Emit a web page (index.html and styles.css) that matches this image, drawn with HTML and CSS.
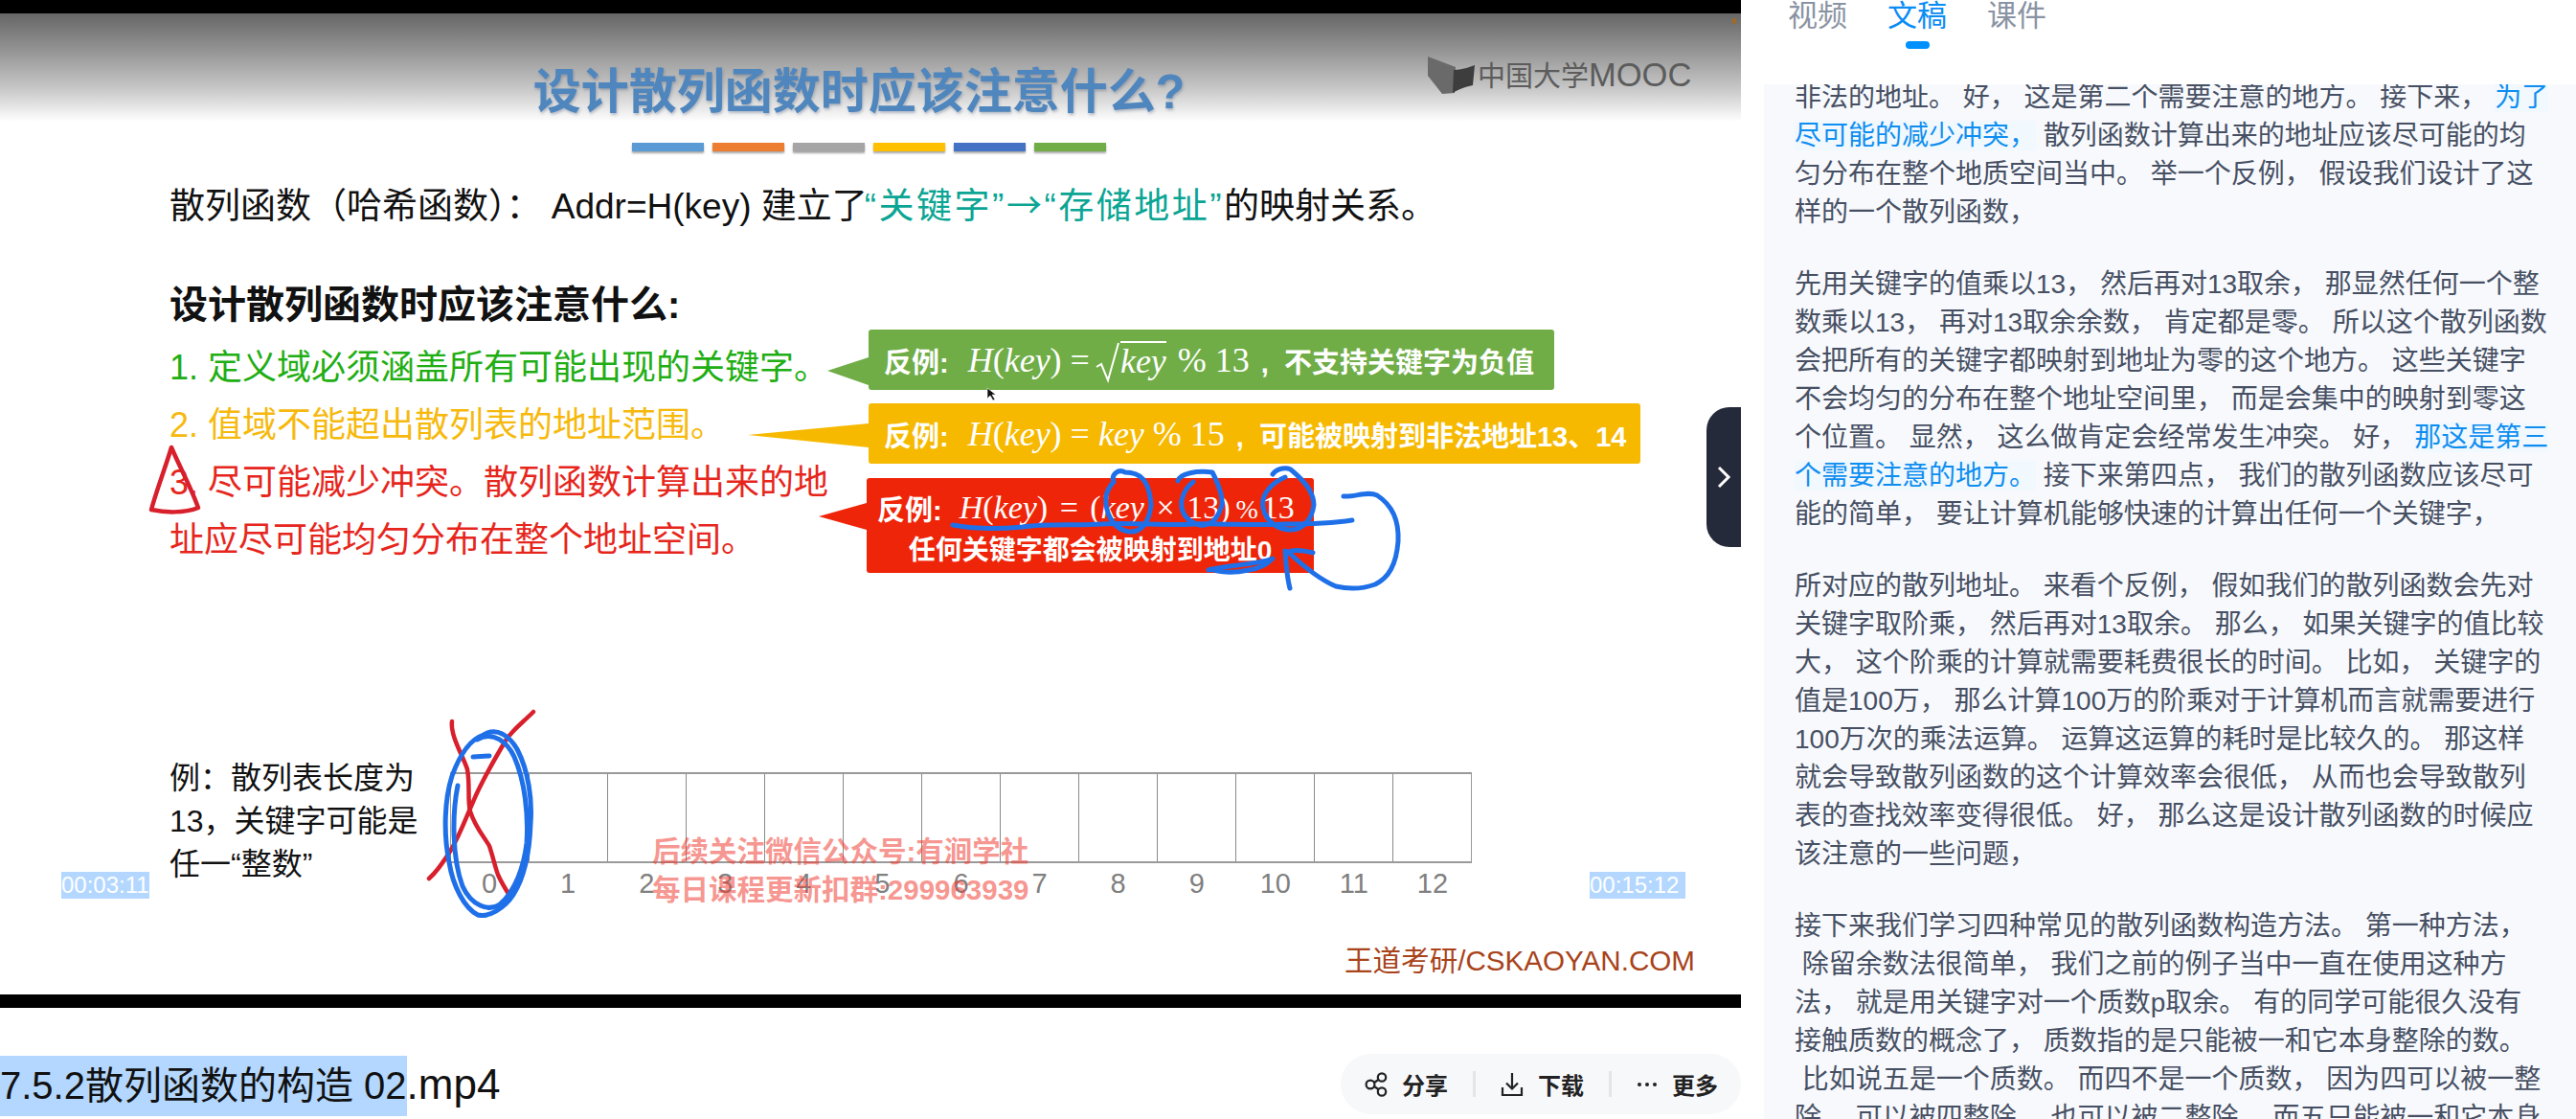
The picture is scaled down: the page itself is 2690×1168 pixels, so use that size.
FILE: index.html
```html
<!doctype html>
<html lang="zh-CN">
<head>
<meta charset="utf-8">
<title>7.5.2散列函数的构造</title>
<link rel="stylesheet" href="styles.css">
</head>
<body>
<div class="page">
  <main class="main">
    <div class="video">
      <div class="slide">
        <header class="slide-head">
          <h1 class="slide-title">设计散列函数时应该注意什么?</h1>
          <div class="mooc-logo">
            <svg class="mooc-icon" width="50" height="40" viewBox="0 0 50 40">
              <polygon points="0,0 29,11 28,38 15,39 0,20" fill="#6a6a6a"/>
              <path d="M27 14 Q37 14 49 9 L47 30 Q36 32 26 38 Z" fill="#3d3d3d"/>
            </svg>
            <span>中国大学<span class="mooc-latin">MOOC</span></span>
          </div>
        </header>
        <div class="bars">
          <span class="bar bar-blue"></span>
          <span class="bar bar-orange"></span>
          <span class="bar bar-grey"></span>
          <span class="bar bar-yellow"></span>
          <span class="bar bar-navy"></span>
          <span class="bar bar-green"></span>
        </div>
        <div class="slide-body">
          <p class="definition">散列函数（哈希函数）： Addr=H(key) 建立了<span class="teal">“关键字”<span class="arrow">→</span>“存储地址”</span>的映射关系。</p>
          <h2 class="rules-title">设计散列函数时应该注意什么:</h2>
          <ol class="rules">
            <li class="rule-green">1. 定义域必须涵盖所有可能出现的关键字。</li>
            <li class="rule-yellow">2. 值域不能超出散列表的地址范围。</li>
            <li class="rule-red">3. 尽可能减少冲突。散列函数计算出来的地<br>址应尽可能均匀分布在整个地址空间。</li>
          </ol>
          <div class="example">
            <p class="example-text">例：散列表长度为<br>13，关键字可能是<br>任一“整数”</p>
            <div class="table-wrap">
              <div class="hash-table">
                <span></span><span></span><span></span><span></span><span></span><span></span><span></span><span></span><span></span><span></span><span></span><span></span><span></span>
              </div>
              <div class="hash-index">
                <span>0</span><span>1</span><span>2</span><span>3</span><span>4</span><span>5</span><span>6</span><span>7</span><span>8</span><span>9</span><span>10</span><span>11</span><span>12</span>
              </div>
            </div>
          </div>
          <p class="credit">王道考研/CSKAOYAN.COM</p>
        </div>

        <div class="callout callout-green">
          <span class="cjk cjk-label">反例:</span>
          <span class="math"><i>H</i>(<i>key</i>) =</span>
          <svg class="radical" width="26" height="44" viewBox="0 0 26 44"><path d="M1 27 L6 24 L13 41 L24 2" fill="none" stroke="#fff" stroke-width="2"/></svg>
          <span class="math radicand"><i>key</i></span>
          <span class="math">% 13</span>
          <span class="cjk">, 不支持关键字为负值</span>
        </div>
        <div class="callout callout-yellow">
          <span class="cjk cjk-label">反例:</span>
          <span class="math"><i>H</i>(<i>key</i>) = <i>key</i> % 15</span>
          <span class="cjk">, 可能被映射到非法地址13、14</span>
        </div>
        <div class="callout callout-red">
          <div class="callout-line">
            <span class="cjk cjk-label">反例:</span>
            <span class="math math-tight"><i>H</i>(<i>key</i>) = (<i>key</i> × 13)<span class="pct">%</span>13</span>
          </div>
          <div class="callout-line callout-line-center"><span class="cjk">任何关键字都会被映射到地址0</span></div>
        </div>

        <div class="watermark">后续关注微信公众号:有涧学社<br>每日课程更新扣群:299963939</div>
        <span class="timestamp timestamp-start">00:03:11</span>
        <span class="timestamp timestamp-end">00:15:12</span>

        <svg class="ink" viewBox="0 14 1818 1024" width="1818" height="1024">
          <g class="ink-red">
            <path d="M179 467 C172 490 164 510 158 532 C172 535 192 536 207 530 C200 510 188 488 179 467 Z"/>
            <path d="M472 753 C470 768 484 790 488 803 C491 820 488 835 491 847 C497 865 506 874 511 883 C515 895 517 905 520 913 C524 922 528 928 531 933"/>
            <path d="M557 743 C545 755 535 762 528 773 C515 795 503 815 494 837 C486 855 480 872 471 887 C463 900 456 910 448 917"/>
          </g>
          <g class="ink-blue">
            <path d="M505 767 C520 758 533 770 540 782 C552 805 556 835 554 860 C553 890 548 915 536 934 C527 948 510 958 499 955 C485 948 473 925 469 900 C463 870 464 835 472 810 C480 788 490 772 505 767 Z"/>
            <path d="M498 772 C515 762 530 775 537 790 C548 815 552 850 550 880 C547 905 538 930 522 944 C510 952 492 945 483 925 C472 895 472 850 478 820"/>
            <path d="M494 790 L511 789"/>
            <path d="M995 548 C1020 553 1045 552 1068 550 C1095 546 1125 549 1151 547 C1185 545 1215 549 1246 547 C1280 546 1310 549 1342 547 C1370 547 1392 546 1412 543"/>
            <path d="M1163 503 C1160 495 1168 489 1175 493 C1190 493 1200 500 1202 527 C1200 545 1192 556 1179 555 C1165 553 1156 540 1155 525 C1154 515 1158 508 1163 503"/>
            <path d="M1230 502 C1232 494 1250 491 1266 493 C1275 510 1278 525 1275 530 C1270 545 1262 549 1253 548 C1240 545 1232 535 1234 522 C1236 513 1242 506 1246 503"/>
            <path d="M1329 495 C1333 489 1345 486 1350 492 C1362 502 1372 515 1372 527 C1370 543 1360 553 1348 553 C1335 553 1322 545 1319 530 C1316 515 1330 503 1342 498"/>
            <path d="M1403 518 C1415 519 1428 512 1438 517 C1455 528 1461 545 1460 565 C1458 590 1450 603 1436 610 C1422 615 1408 615 1395 612 C1378 605 1360 590 1345 576 C1353 573 1363 575 1371 577"/>
            <path d="M1342 575 C1343 590 1344 603 1347 614"/>
            <path d="M1262 595 C1280 590 1310 590 1329 583 C1322 590 1312 594 1304 595 C1290 598 1275 598 1264 594"/>
          </g>
        </svg>
        <span class="dust"></span>
        <svg class="pointer" width="12" height="16" viewBox="0 0 12 16"><path d="M1 1 L1 12 L4 9 L7 14 L9 13 L6 8 L10 8 Z" fill="#111" stroke="#fff" stroke-width="0.6"/></svg>
      </div>
      <button class="collapse"><svg width="16" height="26" viewBox="0 0 16 26"><path d="M3 3 L13 13 L3 23" fill="none" stroke="#fff" stroke-width="3"/></svg></button>
    </div>

    <div class="info">
      <h3 class="file-name"><span class="selected">7.5.2散列函数的构造 02</span><span class="file-ext">.mp4</span></h3>
      <div class="actions">
        <a class="action">
          <svg width="24" height="26" viewBox="0 0 24 26" fill="none" stroke="#222" stroke-width="2.2">
            <circle cx="6" cy="13" r="4.4"/><circle cx="18" cy="5.5" r="4.2"/><circle cx="18" cy="20.5" r="4.2"/>
            <path d="M10 11 L14.4 8 M10 15 L14.4 18"/>
          </svg>
          <span>分享</span>
        </a>
        <i class="action-sep"></i>
        <a class="action">
          <svg width="24" height="26" viewBox="0 0 24 26" fill="none" stroke="#222" stroke-width="2.2">
            <path d="M12 1 L12 17 M6 11.5 L12 17.5 L18 11.5 M2 16 L2 24 L22 24 L22 16"/>
          </svg>
          <span>下载</span>
        </a>
        <i class="action-sep"></i>
        <a class="action">
          <svg width="22" height="26" viewBox="0 0 22 26" fill="#222">
            <circle cx="3" cy="13" r="2"/><circle cx="11" cy="13" r="2"/><circle cx="19" cy="13" r="2"/>
          </svg>
          <span>更多</span>
        </a>
      </div>
    </div>
  </main>

  <aside class="side">
    <nav class="tabs">
      <a class="tab">视频</a>
      <a class="tab tab-active">文稿</a>
      <a class="tab">课件</a>
    </nav>
    <div class="transcript">
      <p class="para">非法的地址。 好， 这是第二个需要注意的地方。 接下来， <span class="mark">为了</span>
<span class="mark">尽可能的减少冲突，</span> 散列函数计算出来的地址应该尽可能的均
匀分布在整个地质空间当中。 举一个反例， 假设我们设计了这
样的一个散列函数，</p>
      <p class="para">先用关键字的值乘以13， 然后再对13取余， 那显然任何一个整
数乘以13， 再对13取余余数， 肯定都是零。 所以这个散列函数
会把所有的关键字都映射到地址为零的这个地方。 这些关键字
不会均匀的分布在整个地址空间里， 而是会集中的映射到零这
个位置。 显然， 这么做肯定会经常发生冲突。 好， <span class="mark">那这是第三</span>
<span class="mark">个需要注意的地方。</span> 接下来第四点， 我们的散列函数应该尽可
能的简单， 要让计算机能够快速的计算出任何一个关键字，</p>
      <p class="para">所对应的散列地址。 来看个反例， 假如我们的散列函数会先对
关键字取阶乘， 然后再对13取余。 那么， 如果关键字的值比较
大， 这个阶乘的计算就需要耗费很长的时间。 比如， 关键字的
值是100万， 那么计算100万的阶乘对于计算机而言就需要进行
100万次的乘法运算。 运算这运算的耗时是比较久的。 那这样
就会导致散列函数的这个计算效率会很低， 从而也会导致散列
表的查找效率变得很低。 好， 那么这是设计散列函数的时候应
该注意的一些问题，</p>
      <p class="para">接下来我们学习四种常见的散列函数构造方法。 第一种方法，
 除留余数法很简单， 我们之前的例子当中一直在使用这种方
法， 就是用关键字对一个质数p取余。 有的同学可能很久没有
接触质数的概念了， 质数指的是只能被一和它本身整除的数。
 比如说五是一个质数。 而四不是一个质数， 因为四可以被一整
除， 可以被四整除， 也可以被二整除， 而五只能被一和它本身</p>
    </div>
  </aside>
</div>
</body>
</html>
```
FILE: styles.css
```css
* {
  box-sizing: border-box;
}

html, body {
  margin: 0;
  padding: 0;
  background: white;
  overflow: hidden;
  font-family: "Liberation Sans", "Noto Sans CJK SC", sans-serif;
}

p, h1, h2, h3, ol {
  margin: 0;
  padding: 0;
  font-weight: normal;
}

.page {
  display: flex;
  width: 2690px;
  height: 1168px;
  overflow: hidden;
}

.main {
  width: 1818px;
  flex: none;
}

/* video frame */
.video {
  position: relative;
  background: black;
  padding: 14px 0;
}

.slide {
  position: relative;
  height: 1024px;
  background: white;
  overflow: hidden;
}

.slide-head {
  position: relative;
  height: 113px;
  padding: 56px 24px 0 0;
  display: flex;
  justify-content: center;
  background: linear-gradient(#666 0%, #8e8e8e 30%, #c8c8c8 70%, white 100%);
}

.slide-title {
  font-size: 50px;
  line-height: 52px;
  font-weight: bold;
  color: #4f86bd;
  text-shadow: 1px 2px 3px rgba(70, 90, 120, 0.35);
  white-space: nowrap;
}

.mooc-logo {
  position: absolute;
  left: 1491px;
  top: 44px;
  display: flex;
  align-items: center;
  gap: 2px;
  font-size: 29px;
  line-height: 40px;
  color: #5c5c5c;
  white-space: nowrap;
}

.mooc-latin {
  font-size: 34.5px;
}

.bars {
  display: flex;
  gap: 9px;
  margin: 22px 0 0 660px;
}

.bar {
  width: 75px;
  height: 9px;
  box-shadow: 0 2px 2px rgba(0, 0, 0, 0.35);
}
.bar-blue { background: #5b9bd5; }
.bar-orange { background: #ed7d31; }
.bar-grey { background: #a5a5a5; }
.bar-yellow { background: #ffc000; }
.bar-navy { background: #4472c4; }
.bar-green { background: #70ad47; }

.slide-body {
  padding-left: 177px;
}

.definition {
  margin-top: 33px;
  font-size: 37px;
  line-height: 50px;
  color: #111;
  white-space: nowrap;
}

.teal {
  margin-left: -3px;
  letter-spacing: 2.5px;
  color: #0ba594;
}

.arrow {
  font-family: "Noto Sans CJK SC", sans-serif;
  line-height: 0;
}

.rules-title {
  margin-top: 52px;
  font-size: 40px;
  line-height: 50px;
  font-weight: bold;
  color: #111;
  white-space: nowrap;
}

.rules {
  margin-top: 11px;
  list-style: none;
  font-size: 36px;
  line-height: 60px;
  white-space: nowrap;
}
.rule-green { color: #1fae14; }
.rule-yellow { color: #f6b90c; }
.rule-red { color: #e6261c; }

.example {
  display: flex;
  margin-top: 196px;
}

.example-text {
  width: 293px;
  flex: none;
  font-size: 32px;
  line-height: 45px;
  color: #111;
  white-space: nowrap;
}

.table-wrap {
  margin-top: 16px;
}

.hash-table {
  display: flex;
  width: 1067px;
  height: 95px;
  border: 1px solid #9a9a9a;
  border-width: 2px 1px 2px 1px;
}

.hash-table span {
  flex: 1;
  border-left: 1px solid #8a8a8a;
}
.hash-table span:first-child {
  border-left: 0;
}

.hash-index {
  display: flex;
  width: 1067px;
  margin-top: 5px;
  font-size: 29px;
  line-height: 32px;
  color: #808080;
}

.hash-index span {
  flex: 1;
  text-align: center;
}

.credit {
  margin-top: 45px;
  padding-right: 48px;
  text-align: right;
  font-size: 29.6px;
  line-height: 40px;
  color: #a8431a;
}

/* counter example callouts */
.callout {
  position: absolute;
  border-radius: 3px;
  color: white;
  font-size: 29px;
  font-weight: bold;
  white-space: nowrap;
  display: flex;
  align-items: center;
  gap: 12px;
  padding-left: 16px;
}

.callout::before {
  content: "";
  position: absolute;
  border-style: solid;
  border-color: transparent;
  border-left-width: 0;
}

.callout-green {
  left: 907px;
  top: 330px;
  width: 716px;
  height: 63px;
  background: #70ad47;
}
.callout-green::before {
  left: -43px;
  top: 29px;
  border-width: 14px 43px 15px 0;
  border-right-color: #70ad47;
}

.callout-yellow {
  left: 907px;
  top: 407px;
  width: 806px;
  height: 63px;
  background: #f6b900;
}
.callout-yellow::before {
  left: -126px;
  top: 21px;
  border-width: 12px 126px 13px 0;
  border-right-color: #f6b900;
}

.callout-red {
  left: 905px;
  top: 485px;
  width: 467px;
  height: 99px;
  background: #ef2509;
  display: block;
  padding: 9px 0 0 11px;
}
.callout-red::before {
  left: -50px;
  top: 26px;
  border-width: 14px 50px 14px 0;
  border-right-color: #ef2509;
}

.callout-line {
  display: flex;
  align-items: center;
  gap: 10px;
  height: 44px;
}

.callout-line-center {
  justify-content: center;
  margin-top: -2px;
  padding-right: 11px;
  font-size: 28px;
}

.cjk {
  word-spacing: 8px;
}

.cjk-label {
  margin-right: 8px;
}

.math {
  font-family: "Liberation Serif", serif;
  font-weight: normal;
  font-size: 36px;
  white-space: pre;
}

.math-tight {
  font-size: 34px;
  word-spacing: 4px;
}

.pct {
  margin: 0 4px 0 6px;
  font-size: 28px;
}

.radical {
  margin: 4px -12px 0 -6px;
}

.radicand {
  border-top: 2px solid white;
  line-height: 38px;
}

.watermark {
  position: absolute;
  left: 681px;
  top: 855px;
  font-size: 29.5px;
  line-height: 40px;
  font-weight: bold;
  color: rgba(240, 60, 50, 0.55);
  white-space: nowrap;
}

.timestamp {
  position: absolute;
  top: 896px;
  height: 28px;
  background: #b3d7ff;
  color: white;
  font-size: 24px;
  line-height: 28px;
}
.timestamp-start {
  left: 64px;
  width: 92px;
}
.timestamp-end {
  left: 1660px;
  width: 100px;
}

.ink {
  position: absolute;
  left: 0;
  top: 0;
  fill: none;
  stroke-linecap: round;
  stroke-linejoin: round;
}
.ink-red {
  stroke: #d81f2c;
  stroke-width: 4.5;
}
.ink-blue {
  stroke: #1f70e8;
  stroke-width: 5;
}

.dust {
  position: absolute;
  left: 1809px;
  top: 5px;
  width: 4px;
  height: 6px;
  border-radius: 2px;
  background: #a5691f;
}

.pointer {
  position: absolute;
  left: 1030px;
  top: 390px;
}

.collapse {
  position: absolute;
  right: 0;
  top: 425px;
  width: 36px;
  height: 146px;
  padding: 0;
  border: 0;
  border-radius: 24px 0 0 24px;
  background: #252a3a;
  display: flex;
  align-items: center;
  justify-content: center;
}

/* below the video */
.info {
  display: flex;
  justify-content: space-between;
  margin-top: 48px;
  height: 63px;
}

.file-name {
  font-size: 40px;
  line-height: 63px;
  color: #111;
  white-space: nowrap;
}

.selected {
  display: inline-block;
  background: #b3d7ff;
}

.file-ext {
  font-size: 44px;
}

.actions {
  display: flex;
  align-items: center;
  width: 418px;
  padding-left: 25px;
  border-radius: 32px;
  background: #f7f8fa;
}

.action {
  display: flex;
  align-items: center;
  gap: 15px;
  font-size: 24px;
  font-weight: bold;
  color: #222;
}

.action-sep {
  width: 3px;
  height: 27px;
  margin: 0 26px;
  background: #e3e5e8;
}

/* transcript column */
.side {
  flex: 1;
  display: flex;
  flex-direction: column;
  min-width: 0;
}

.tabs {
  display: flex;
  gap: 42px;
  height: 88px;
  flex: none;
  padding-left: 49px;
}

.tab {
  position: relative;
  height: 34px;
  font-size: 31px;
  line-height: 34px;
  color: #8a93a3;
}

.tab-active {
  color: #0a8cf5;
}

.tab-active::after {
  content: "";
  position: absolute;
  left: 19px;
  top: 43px;
  width: 25px;
  height: 8px;
  border-radius: 4px;
  background: #0091ff;
}

.transcript {
  flex: 1;
  margin-left: 24px;
  padding-left: 32px;
  background: #f7f9fd;
  overflow: hidden;
}

.para {
  font-size: 28px;
  line-height: 40px;
  color: #475063;
  white-space: pre;
  margin-bottom: 35px;
}

.para:first-child {
  margin-top: -6px;
}

.mark {
  color: #0e8ef0;
  background: #f1f8fe;
}
```
